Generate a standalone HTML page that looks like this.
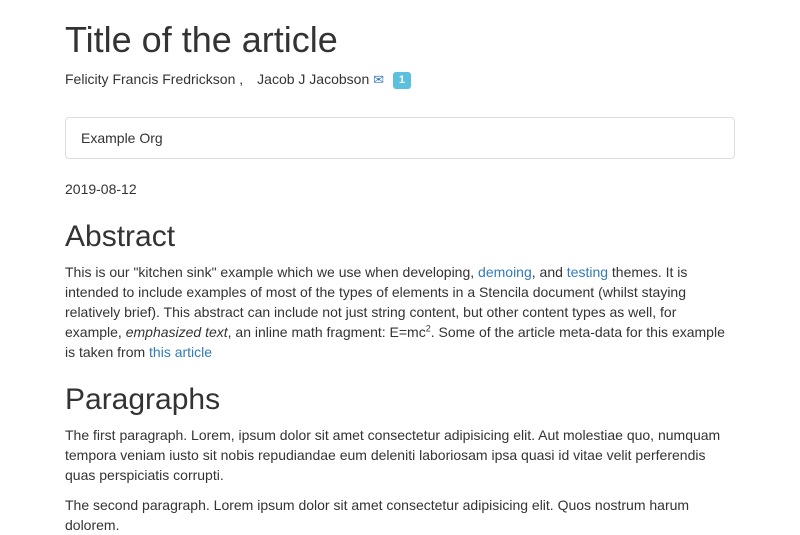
<!DOCTYPE html>
<html><head><meta charset="utf-8"><style>
html,body{overflow:hidden;height:500px}
body{margin:0;background:#fff;font-family:"Liberation Sans",sans-serif;font-size:14px;line-height:20px;color:#333;}
.c{position:absolute;left:65px;width:670px;}
h1,h2{font-weight:500;margin:0;color:#333;}
a{color:#337ab7;text-decoration:none}
p{margin:0}
.badge{display:inline-block;background:#5bc0de;color:#fff;font-size:11px;font-weight:bold;line-height:17px;padding:0 6px;border-radius:3px;vertical-align:1px;margin-left:5px}
.panel{border:1px solid #ddd;border-radius:4px;height:40px;box-sizing:border-box;padding:10px 15px;line-height:19px}
</style></head><body>
<div class="c" style="top:19px"><h1 style="font-size:36px;line-height:42px">Title of the article</h1></div>
<div class="c" style="top:69px">Felicity Francis Fredrickson ,<span style="margin-left:14px">Jacob J Jacobson</span> <span style="color:#337ab7;font-size:13px">✉</span> <span class="badge">1</span></div>
<div class="c panel" style="top:117px;height:42px;padding-top:11px">Example Org</div>
<div class="c" style="top:179px">2019-08-12</div>
<div class="c" style="top:219px"><h2 style="font-size:30px;line-height:36px">Abstract</h2></div>
<div class="c" style="top:262px"><p>This is our "kitchen sink" example which we use when developing, <a>demoing</a>, and <a>testing</a> themes. It is intended to include examples of most of the types of elements in a Stencila document (whilst staying relatively brief). This abstract can include not just string content, but other content types as well, for example, <em>emphasized text</em>, an inline math fragment: E=mc<sup style="font-size:9px;line-height:0">2</sup>. Some of the article meta-data for this example is taken from <a>this article</a></p></div>
<div class="c" style="top:382px"><h2 style="font-size:30px;line-height:36px">Paragraphs</h2></div>
<div class="c" style="top:425px"><p>The first paragraph. Lorem, ipsum dolor sit amet consectetur adipisicing elit. Aut molestiae quo, numquam tempora veniam iusto sit nobis repudiandae eum deleniti laboriosam ipsa quasi id vitae velit perferendis quas perspiciatis corrupti.</p>
<p style="margin-top:10px">The second paragraph. Lorem ipsum dolor sit amet consectetur adipisicing elit. Quos nostrum harum dolorem.</p></div>
</body></html>
